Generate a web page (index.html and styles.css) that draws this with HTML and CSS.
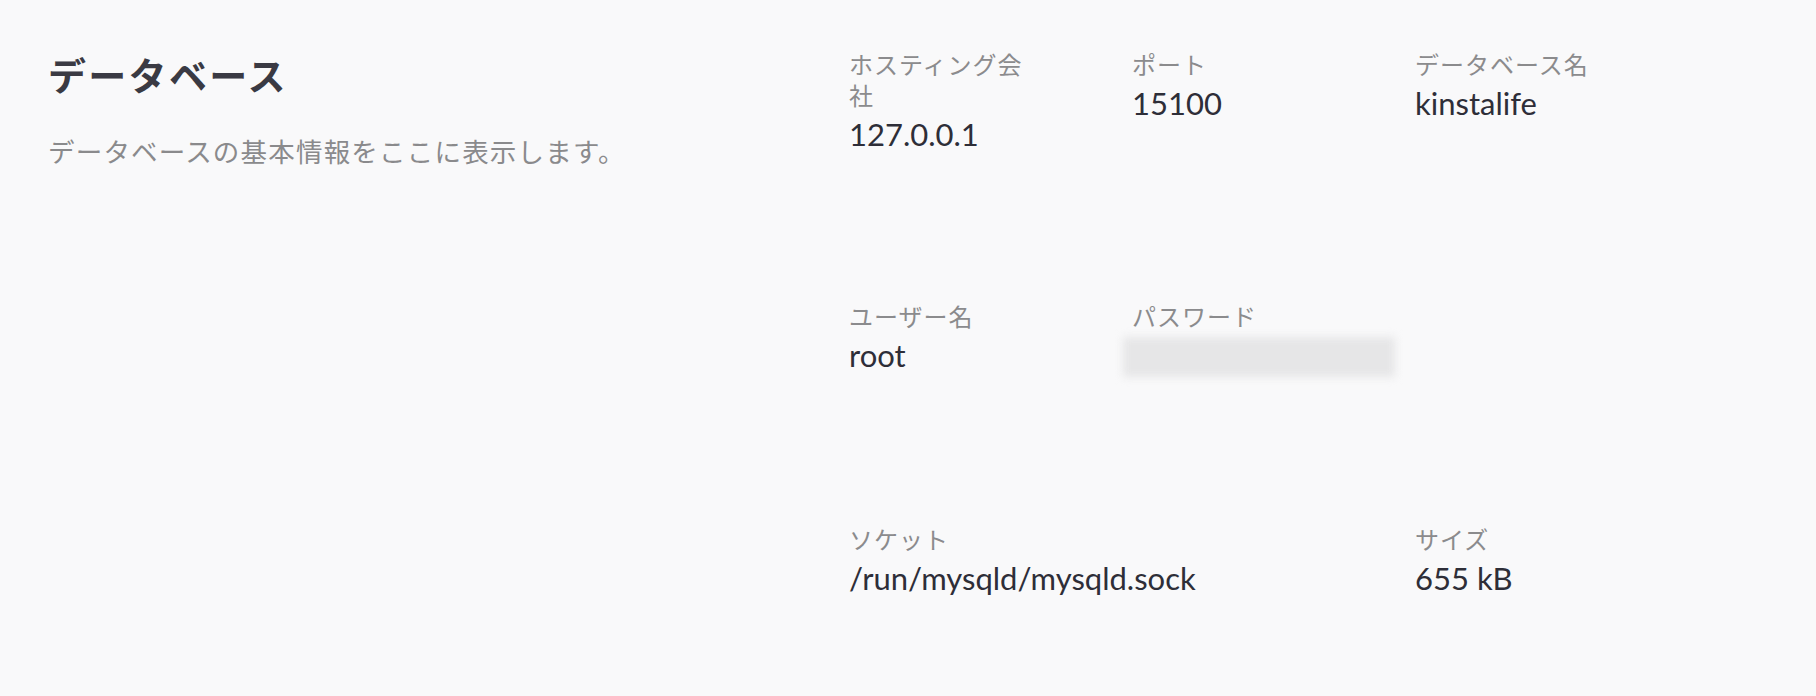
FILE: index.html
```html
<!DOCTYPE html>
<html lang="ja">
<head>
<meta charset="utf-8">
<title>データベース</title>
<link rel="stylesheet" href="styles.css">
</head>
<body>
<div class="page">
  <section class="intro">
    <h1 class="title">データベース</h1>
    <p class="desc">データベースの基本情報をここに表示します。</p>
  </section>
  <section class="info">
    <div class="item">
      <div class="label">ホスティング会社</div>
      <div class="value">127.0.0.1</div>
    </div>
    <div class="item">
      <div class="label">ポート</div>
      <div class="value">15100</div>
    </div>
    <div class="item">
      <div class="label">データベース名</div>
      <div class="value">kinstalife</div>
    </div>
    <div class="item">
      <div class="label">ユーザー名</div>
      <div class="value">root</div>
    </div>
    <div class="item">
      <div class="label">パスワード</div>
      <div class="secret"></div>
    </div>
    <div class="item empty"></div>
    <div class="item wide">
      <div class="label">ソケット</div>
      <div class="value">/run/mysqld/mysqld.sock</div>
    </div>
    <div class="item">
      <div class="label">サイズ</div>
      <div class="value">655 kB</div>
    </div>
  </section>
</div>
</body>
</html>
```
FILE: styles.css
```css
html, body {
  margin: 0;
  padding: 0;
  background: #f9f9fa;
}
body {
  font-family: "Noto Sans CJK JP", "Lato", sans-serif;
  width: 1816px;
  height: 696px;
  overflow: hidden;
}
.page {
  display: flex;
  padding: 48px 0 0 48px;
}
.intro {
  width: 801px;
  flex: none;
}
.title {
  margin: 0;
  font-size: 38px;
  line-height: 52px;
  font-weight: 700;
  letter-spacing: 2.3px;
  color: #3a3a43;
}
.desc {
  margin: 33px 0 0;
  font-size: 26.5px;
  line-height: 36px;
  letter-spacing: 1.2px;
  color: #8a8a8c;
}
.info {
  display: grid;
  grid-template-columns: repeat(3, 190px);
  column-gap: 93px;
  row-gap: 146px;
  align-items: start;
}
.item.wide {
  grid-column: span 2;
}
.label {
  font-size: 24px;
  line-height: 31px;
  letter-spacing: 1px;
  color: #8b8b8d;
}
.value {
  margin-top: 4px;
  font-family: "Lato", "Noto Sans CJK JP", sans-serif;
  font-size: 31px;
  line-height: 40px;
  color: #2e2e38;
}
.secret {
  margin: 6px 0 0 -9px;
  width: 272px;
  height: 40px;
  background: #e6e6e7;
  filter: blur(4px);
}
```
